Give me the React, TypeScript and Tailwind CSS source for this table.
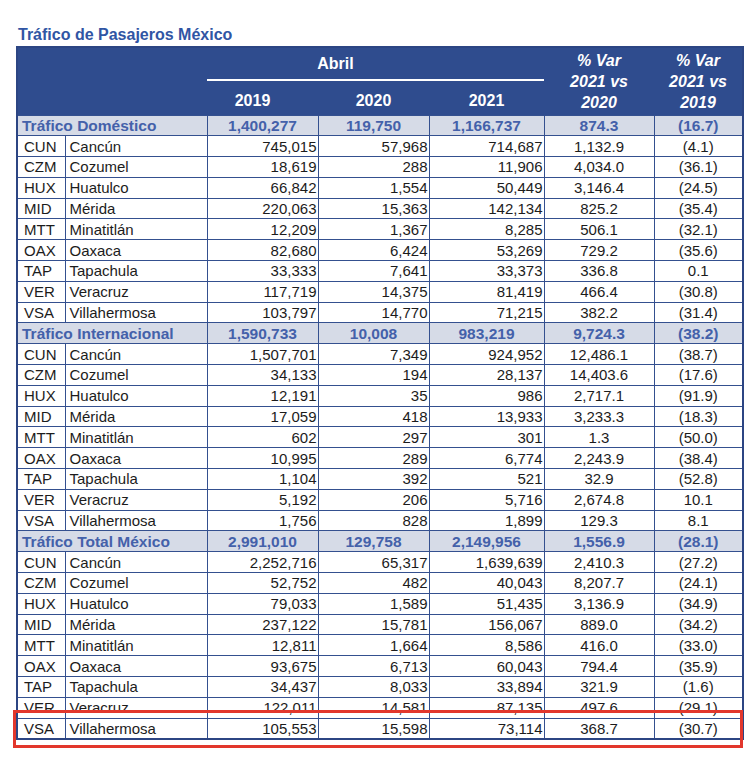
import React from "react";

type Row = [string, string, string, string, string, string, string];
type Section = { title: string; totals: [string, string, string, string, string]; rows: Row[] };

const sections: Section[] = [
  {
    title: "Tráfico Doméstico",
    totals: ["1,400,277", "119,750", "1,166,737", "874.3", "(16.7)"],
    rows: [
      ["CUN", "Cancún", "745,015", "57,968", "714,687", "1,132.9", "(4.1)"],
      ["CZM", "Cozumel", "18,619", "288", "11,906", "4,034.0", "(36.1)"],
      ["HUX", "Huatulco", "66,842", "1,554", "50,449", "3,146.4", "(24.5)"],
      ["MID", "Mérida", "220,063", "15,363", "142,134", "825.2", "(35.4)"],
      ["MTT", "Minatitlán", "12,209", "1,367", "8,285", "506.1", "(32.1)"],
      ["OAX", "Oaxaca", "82,680", "6,424", "53,269", "729.2", "(35.6)"],
      ["TAP", "Tapachula", "33,333", "7,641", "33,373", "336.8", "0.1"],
      ["VER", "Veracruz", "117,719", "14,375", "81,419", "466.4", "(30.8)"],
      ["VSA", "Villahermosa", "103,797", "14,770", "71,215", "382.2", "(31.4)"],
    ],
  },
  {
    title: "Tráfico Internacional",
    totals: ["1,590,733", "10,008", "983,219", "9,724.3", "(38.2)"],
    rows: [
      ["CUN", "Cancún", "1,507,701", "7,349", "924,952", "12,486.1", "(38.7)"],
      ["CZM", "Cozumel", "34,133", "194", "28,137", "14,403.6", "(17.6)"],
      ["HUX", "Huatulco", "12,191", "35", "986", "2,717.1", "(91.9)"],
      ["MID", "Mérida", "17,059", "418", "13,933", "3,233.3", "(18.3)"],
      ["MTT", "Minatitlán", "602", "297", "301", "1.3", "(50.0)"],
      ["OAX", "Oaxaca", "10,995", "289", "6,774", "2,243.9", "(38.4)"],
      ["TAP", "Tapachula", "1,104", "392", "521", "32.9", "(52.8)"],
      ["VER", "Veracruz", "5,192", "206", "5,716", "2,674.8", "10.1"],
      ["VSA", "Villahermosa", "1,756", "828", "1,899", "129.3", "8.1"],
    ],
  },
  {
    title: "Tráfico Total México",
    totals: ["2,991,010", "129,758", "2,149,956", "1,556.9", "(28.1)"],
    rows: [
      ["CUN", "Cancún", "2,252,716", "65,317", "1,639,639", "2,410.3", "(27.2)"],
      ["CZM", "Cozumel", "52,752", "482", "40,043", "8,207.7", "(24.1)"],
      ["HUX", "Huatulco", "79,033", "1,589", "51,435", "3,136.9", "(34.9)"],
      ["MID", "Mérida", "237,122", "15,781", "156,067", "889.0", "(34.2)"],
      ["MTT", "Minatitlán", "12,811", "1,664", "8,586", "416.0", "(33.0)"],
      ["OAX", "Oaxaca", "93,675", "6,713", "60,043", "794.4", "(35.9)"],
      ["TAP", "Tapachula", "34,437", "8,033", "33,894", "321.9", "(1.6)"],
      ["VER", "Veracruz", "122,011", "14,581", "87,135", "497.6", "(29.1)"],
      ["VSA", "Villahermosa", "105,553", "15,598", "73,114", "368.7", "(30.7)"],
    ],
  },
];

const cell = "border border-[#34508f] p-0 h-[20.8px] leading-[19px] whitespace-nowrap";

export default function App() {
  return (
    <div className="relative w-[750px] h-[761px] bg-white font-['Liberation_Sans',Arial,sans-serif] text-[15px] text-[#1c1c1c]">
      <div className="pl-[18px] pt-[26px] h-[46px] text-[16px] font-bold leading-[18px] text-[#3055a4]">
        Tráfico de Pasajeros México
      </div>

      <table className="ml-[16px] w-[726px] table-fixed border-collapse border-2 border-[#2c4583]">
        <colgroup>
          <col className="w-[48px]" />
          <col className="w-[142px]" />
          <col className="w-[111px]" />
          <col className="w-[111px]" />
          <col className="w-[115px]" />
          <col className="w-[110px]" />
          <col className="w-[89px]" />
        </colgroup>
        <thead className="bg-[#2f4c8e] text-white font-bold text-[16px]">
          <tr className="h-[33px]">
            <th colSpan={2} rowSpan={2} className="p-0" />
            <th colSpan={3} className="p-0 align-bottom">
              <div className="h-[31px] flex items-center justify-center pr-[80px]">Abril</div>
              <div className="h-[2px] bg-white" />
            </th>
            <th rowSpan={2} className="p-0 italic leading-[21px] text-center">
              % Var
              <br />
              2021 vs
              <br />
              2020
            </th>
            <th rowSpan={2} className="p-0 italic leading-[21px] text-center">
              % Var
              <br />
              2021 vs
              <br />
              2019
            </th>
          </tr>
          <tr className="h-[34px]">
            <th className="p-0 pr-[20px] pt-[6px] text-center">2019</th>
            <th className="p-0 pt-[6px] text-center">2020</th>
            <th className="p-0 pt-[6px] text-center">2021</th>
          </tr>
        </thead>
        <tbody>
          {sections.map((s) => (
            <React.Fragment key={s.title}>
              <tr className="bg-[#d6dbe7] text-[#4461aa] font-bold text-[15.5px]">
                <td colSpan={2} className={`${cell} pl-[4px]`}>
                  {s.title}
                </td>
                {s.totals.map((t, i) => (
                  <td key={i} className={`${cell} text-center`}>
                    {t}
                  </td>
                ))}
              </tr>
              {s.rows.map((r, i) => (
                <tr key={i}>
                  <td className={`${cell} pl-[6px]`}>{r[0]}</td>
                  <td className={`${cell} pl-[4px]`}>{r[1]}</td>
                  <td className={`${cell} text-right pr-[1px]`}>{r[2]}</td>
                  <td className={`${cell} text-right pr-[1px]`}>{r[3]}</td>
                  <td className={`${cell} text-right pr-[1px]`}>{r[4]}</td>
                  <td className={`${cell} text-center`}>{r[5]}</td>
                  <td className={`${cell} text-center`}>{r[6]}</td>
                </tr>
              ))}
            </React.Fragment>
          ))}
        </tbody>
      </table>

      <div className="absolute left-[13px] top-[710px] w-[730px] h-[38px] border-[3px] border-[#e2372c]" />
    </div>
  );
}
